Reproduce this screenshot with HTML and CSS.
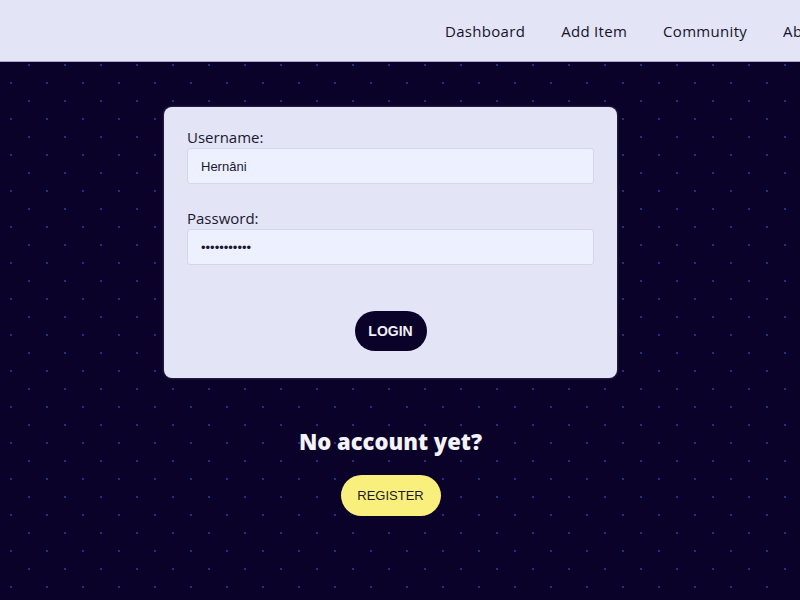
FILE: index.html
```html
<!DOCTYPE html>
<html lang="en">
<head>
    <meta charset="UTF-8">
    <meta name="viewport" content="width=device-width, initial-scale=1.0">
    <title>Login</title>
    <link rel="stylesheet" href="styles.css">
</head>
<body>
    <nav class="navbar">
        <a href="dashboard.html">Dashboard</a>
        <a href="add.html">Add Item</a>
        <a href="community.html">Community</a>
        <a href="about.html">About</a>
    </nav>

    <main class="page">
        <!-- Login form -->
        <div class="form-container">
            <form action="login.php" method="post">
                <label for="username">Username:</label>
                <input type="text" id="username" name="username" value="Hernâni">

                <label for="password">Password:</label>
                <input type="password" id="password" name="password" value="password123">

                <div class="form-actions">
                    <button type="submit" class="btn-login">LOGIN</button>
                </div>
            </form>
        </div>

        <h2 class="register-title">No account yet?</h2>
        <a href="register.html" class="btn-register">REGISTER</a>
    </main>
</body>
</html>
```

FILE: styles.css
```css
html, body {
    height: 100%;
}

body {
    margin: 0;
    padding: 0;
    font-family: "Open Sans", sans-serif;
    background-color: #0b0229;
    background-image:
        radial-gradient(circle, #2b2a8a 1px, transparent 1.5px),
        radial-gradient(circle, #2b2a8a 1px, transparent 1.5px);
    background-size: 36px 36px;
    background-position: 11px 11px, 29px 29px;
    overflow: hidden;
}

.navbar {
    display: flex;
    align-items: center;
    height: 61px;
    padding-left: 445px;
    background-color: #e3e5f6;
    border-bottom: 1px solid #a9a9c4;
    white-space: nowrap;
    overflow: hidden;
}

.navbar a {
    color: #161329;
    margin-right: 36px;
    text-decoration: none;
    font-size: 15px;
    letter-spacing: 0.3px;
}

.page {
    display: flex;
    flex-direction: column;
    align-items: center;
    padding-top: 45px;
    padding-right: 19px;
}

.form-container {
    box-sizing: border-box;
    width: 453px;
    padding: 20px 23px 27px;
    background-color: #e3e4f5;
    border-radius: 8px;
    box-shadow: 0 0 3px rgba(227, 228, 245, 0.3);
}

.form-container label {
    display: block;
    margin-bottom: 1px;
    font-size: 15px;
    color: #1a1830;
}

.form-container input {
    box-sizing: border-box;
    display: block;
    width: 100%;
    height: 36px;
    padding: 0 13px;
    margin-bottom: 24px;
    font-family: "Liberation Sans", Arial, sans-serif;
    font-size: 13px;
    color: #1a1830;
    background-color: #edf0fe;
    border: 1px solid #d6d7e6;
    border-radius: 3px;
}

.form-actions {
    display: flex;
    justify-content: center;
    padding-top: 22px;
}

.btn-login {
    width: 72px;
    height: 40px;
    font-family: "Liberation Sans", Arial, sans-serif;
    font-size: 14px;
    font-weight: bold;
    color: #f1f0f8;
    background-color: #0b0229;
    border: none;
    border-radius: 20px;
    cursor: pointer;
}

.register-title {
    margin: 48px 0 19px;
    font-size: 22px;
    font-weight: 800;
    color: #f4f3fa;
}

.btn-register {
    display: flex;
    align-items: center;
    justify-content: center;
    width: 100px;
    height: 41px;
    font-family: "Liberation Sans", Arial, sans-serif;
    font-size: 13px;
    color: #1e1a2c;
    text-decoration: none;
    background-color: #f9ef7d;
    border-radius: 21px;
}
```
